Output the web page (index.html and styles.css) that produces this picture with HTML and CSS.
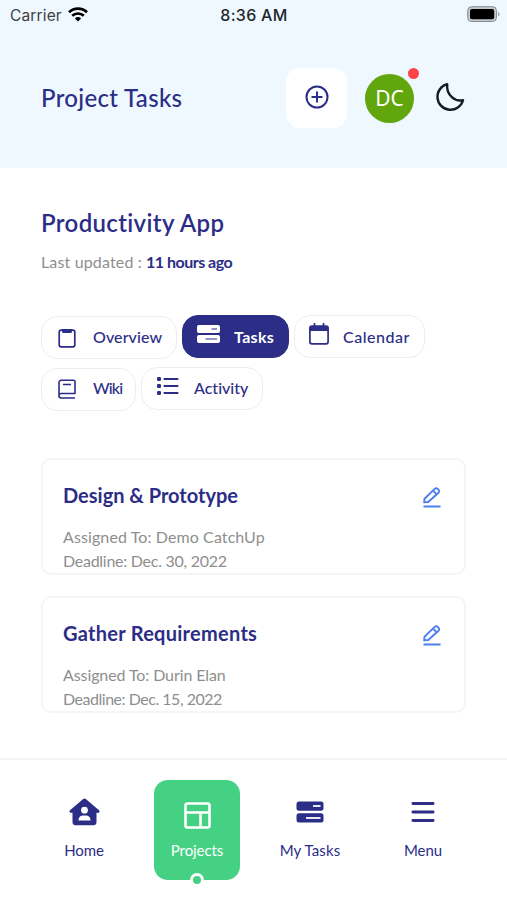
FILE: index.html
```html
<!DOCTYPE html>
<html lang="en">
<head>
    <meta charset="UTF-8">
    <meta name="viewport" content="width=device-width, initial-scale=1.0">
    <title>Project Tasks</title>
    <link rel="stylesheet" href="styles.css">
</head>
<body>
    <header>
        <div class="status-bar">
            <div class="carrier">
                <span>Carrier</span>
                <svg width="20" height="15" viewBox="0 0 20 15" fill="none" stroke="#000" stroke-width="2.7">
                    <path d="M1 5.3a13 13 0 0 1 18 0"/>
                    <path d="M4.2 8.8a8.4 8.4 0 0 1 11.6 0"/>
                    <path d="M10 14.6 6.9 11.5a4.5 4.5 0 0 1 6.2 0z" fill="#000" stroke="none"/>
                </svg>
            </div>
            <span class="time">8:36 AM</span>
            <svg class="battery" width="33" height="16" viewBox="0 0 33 16">
                <rect x=".7" y=".7" width="28.8" height="14.8" rx="4" fill="#c3c9cc" stroke="#858b8f"/>
                <rect x="3" y="3" width="24.2" height="10.2" rx="2" fill="#000"/>
                <path d="M31 5.8c2 .8 2 3.9 0 4.7z" fill="#9ba1a5"/>
            </svg>
        </div>
        <div class="header-row">
            <h1>Project Tasks</h1>
            <button class="add-btn">
                <svg width="24" height="24" viewBox="0 0 24 24" fill="none" stroke="#2b2d87" stroke-width="2">
                    <circle cx="12" cy="12" r="10.5"/>
                    <path d="M12 6.5v11M6.5 12h11"/>
                </svg>
            </button>
            <div class="avatar">DC<span class="dot"></span></div>
            <svg class="moon" width="30" height="30" viewBox="0 0 30 30" fill="none" stroke="#171b20" stroke-width="2.4" stroke-linejoin="round">
                <path d="M12.2 2.2A13 13 0 1 0 28 18.2C20.5 20 11 13.5 12.2 2.2z"/>
            </svg>
        </div>
    </header>

    <main>
        <h2>Productivity App</h2>
        <p class="updated"><span>Last updated :</span> <b>11 hours ago</b></p>

        <div class="tabs">
            <a class="tab overview">
                <svg width="24" height="24" viewBox="0 0 24 24" fill="none" stroke="#2b2d87" stroke-width="1.7">
                    <rect x="4.2" y="4.2" width="15.6" height="16.6" rx="2"/>
                    <path d="M7 3h10v2.5a1.5 1.5 0 0 1-1.5 1.5h-7A1.5 1.5 0 0 1 7 5.5z" fill="#2b2d87" stroke="none"/>
                </svg>
                <span>Overview</span>
            </a>
            <a class="tab tasks">
                <svg width="23" height="18" viewBox="0 0 23 18">
                    <rect width="23" height="8" rx="2" fill="#fff"/>
                    <rect y="10" width="23" height="8" rx="2" fill="#fff"/>
                    <path d="M14.5 4h5.5M8.5 14h11.5" stroke="#2b2d87" stroke-width="1.2"/>
                </svg>
                <span>Tasks</span>
            </a>
            <a class="tab calendar">
                <svg width="20" height="22" viewBox="0 0 20 22" fill="none" stroke="#2b2d87" stroke-width="1.7">
                    <rect x=".9" y="3" width="18.2" height="17.8" rx="2"/>
                    <path d="M1 3h18v5H1z" fill="#2b2d87" stroke="none"/>
                    <path d="M5.5 0v4M14.5 0v4"/>
                </svg>
                <span>Calendar</span>
            </a>
            <a class="tab wiki">
                <svg width="24" height="24" viewBox="0 0 24 24" fill="none" stroke="#2b2d87" stroke-width="1.6">
                    <path d="M20 16.5H6.2a2.2 2.2 0 0 0 0 4.5H20M4 18.5V5.500A2.200 2.200 0 0 1 6.200 3.300H18.500A1.500 1.500 0 0 1 20 4.800V17M8 7.500h8"/>
                </svg>
                <span>Wiki</span>
            </a>
            <a class="tab activity">
                <svg width="22" height="19" viewBox="0 0 22 19" fill="#2b2d87">
                    <rect width="4" height="4" rx="1.3"/>
                    <rect y="7" width="4" height="4" rx="1.3"/>
                    <rect y="14" width="4" height="4" rx="1.3"/>
                    <path d="M7.5 2h13M7.5 9h13M7.5 16h13" stroke="#2b2d87" stroke-width="2.2" stroke-linecap="round"/>
                </svg>
                <span>Activity</span>
            </a>
        </div>

        <div class="card">
            <div class="card-head">
                <h3>Design &amp; Prototype</h3>
                <svg width="18" height="21" viewBox="0 0 18 21" fill="none" stroke="#4c7ff0" stroke-width="1.9" stroke-linejoin="round">
                    <path d="M1.2 15.4 1.5 11.7 11.7 1.9a2.1 2.1 0 0 1 3 0l.8.8a2.1 2.1 0 0 1 0 3L5.2 15z"/>
                    <path d="M10 3.7 13.7 7.4M.5 19.5h17"/>
                </svg>
            </div>
            <p>Assigned To: Demo CatchUp</p>
            <p class="deadline">Deadline: Dec. 30, 2022</p>
        </div>
        <div class="card gather">
            <div class="card-head">
                <h3>Gather Requirements</h3>
                <svg width="18" height="21" viewBox="0 0 18 21" fill="none" stroke="#4c7ff0" stroke-width="1.9" stroke-linejoin="round">
                    <path d="M1.2 15.4 1.5 11.7 11.7 1.9a2.1 2.1 0 0 1 3 0l.8.8a2.1 2.1 0 0 1 0 3L5.2 15z"/>
                    <path d="M10 3.7 13.7 7.4M.5 19.5h17"/>
                </svg>
            </div>
            <p>Assigned To: Durin Elan</p>
            <p class="deadline">Deadline: Dec. 15, 2022</p>
        </div>
    </main>

    <nav>
        <a class="nav-item">
            <svg width="31" height="28" viewBox="0 0 31 28">
                <path d="M14.2 1a2 2 0 0 1 2.6 0L30 12.3c1 1 .4 2.4-.8 2.4H27.5v9.3a3.3 3.3 0 0 1-3.3 3.3H6.8A3.3 3.3 0 0 1 3.5 24V14.7H1.8C.6 14.7 0 13.3 1 12.3z" fill="#2b2d87"/>
                <circle cx="15.5" cy="12.2" r="3.4" fill="#fff"/>
                <path d="M9.5 22.5c0-3 1.9-4.9 4.5-4.9h3c2.6 0 4.5 1.9 4.5 4.9z" fill="#fff"/>
            </svg>
            <span>Home</span>
        </a>
        <a class="nav-item active">
            <svg width="27" height="27" viewBox="0 0 27 27" fill="none" stroke="#fff" stroke-width="2.6">
                <rect x="1.5" y="1.5" width="24" height="24" rx="2"/>
                <path d="M1.5 10.5h24M16.5 10.5v15"/>
            </svg>
            <span>Projects</span>
            <i class="knob"></i>
        </a>
        <a class="nav-item my-tasks">
            <svg width="28" height="22" viewBox="0 0 28 22">
                <rect x=".5" y=".5" width="27" height="9.3" rx="2.5" fill="#2b2d87"/>
                <rect x=".5" y="12.3" width="27" height="9.3" rx="2.5" fill="#2b2d87"/>
                <path d="M17 5h7.5M10 17h14.5" stroke="#e8e8f6" stroke-width="2"/>
            </svg>
            <span>My Tasks</span>
        </a>
        <a class="nav-item menu">
            <svg width="24" height="22" viewBox="0 0 24 22" stroke="#2b2d87" stroke-width="2.8" stroke-linecap="round">
                <path d="M1.9 2.5h20.2M1.9 11h20.2M1.9 19.5h20.2"/>
            </svg>
            <span>Menu</span>
        </a>
    </nav>
</body>
</html>
```
FILE: styles.css
```css
*{
    box-sizing: border-box;
    margin: 0;
    padding: 0;
}
body{
    width: 507px;
    height: 900px;
    display: flex;
    flex-direction: column;
    overflow: hidden;
    background-color: #fff;
    color: #2b2d87;
    font-family: Lato, "Liberation Sans", sans-serif;
    font-variant-ligatures: none;
    white-space: nowrap;
}
svg{
    display: block;
    flex: none;
}
header{
    height: 168px;
    background-color: #eff8ff;
}
.status-bar{
    height: 30px;
    padding: 0 8px 0 10px;
    display: grid;
    grid-template-columns: 1fr auto 1fr;
    align-items: center;
    font-family: Inter, sans-serif;
    font-size: 16px;
    color: #3c4145;
}
.carrier{
    display: flex;
    align-items: center;
    gap: 6px;
    font-size: 15.5px;
    letter-spacing: 0.15px;
}
.carrier svg{
    margin-top: -2px;
}
.time{
    margin-right: 1px;
    font-weight: 500;
    letter-spacing: 0.3px;
    color: #22272b;
}
.battery{
    justify-self: end;
    margin-top: -2px;
    margin-right: -1px;
}
.header-row{
    display: flex;
    align-items: center;
    height: 60px;
    margin-top: 38px;
    padding: 0 42px 0 41px;
}
h1{
    width: 245px;
    margin-top: -1px;
    font-size: 24px;
    font-weight: 500;
    letter-spacing: 0.33px;
}
.add-btn{
    width: 61px;
    height: 60px;
    padding-bottom: 2px;
    display: grid;
    place-items: center;
    border: 0;
    border-radius: 14px;
    background-color: #fff;
}
.avatar{
    position: relative;
    width: 49px;
    height: 49px;
    margin-left: 18px;
    border-radius: 50%;
    background-color: #60a60c;
    color: #fff;
    font: 21px/48px "Noto Sans", sans-serif;
    text-align: center;
}
.dot{
    position: absolute;
    top: -6px;
    right: -5px;
    width: 11px;
    height: 11px;
    border-radius: 50%;
    background-color: #fc4549;
}
.moon{
    margin-left: 21px;
    margin-top: -2px;
}

main{
    flex: 1;
    padding: 37px 41px 0;
}
h2{
    font-size: 24px;
    line-height: 36px;
    font-weight: 600;
    letter-spacing: 0.35px;
}
.updated{
    margin-top: 9px;
    font-size: 16px;
    line-height: 24px;
    color: #8e8e8e;
}
.updated span{
    letter-spacing: 0.15px;
}
.updated b{
    color: #2b2d87;
    letter-spacing: -0.5px;
}
.tabs{
    display: flex;
    flex-wrap: wrap;
    gap: 8px 5px;
    margin-top: 41px;
}
.tab{
    display: flex;
    align-items: center;
    height: 43px;
    padding-left: 14px;
    border: 1px solid #eeeef0;
    border-radius: 16px;
    font-size: 16px;
    font-weight: 500;
}
.tab svg{
    margin-right: 14px;
}
.tab span{
    margin-top: -1px;
}
.overview, .wiki{
    padding-left: 13px;
    margin-top: 1px;
}
.overview span{
    margin-top: -3px;
}
.overview{
    width: 136px;
    letter-spacing: 0.1px;
}
.tasks{
    width: 107px;
    background-color: #2b2d87;
    border-color: #2b2d87;
    color: #fff;
    font-weight: 700;
    letter-spacing: 0.3px;
}
.tasks svg, .calendar svg, .activity svg{
    margin-top: -5px;
}
.calendar{
    width: 131px;
    letter-spacing: 0.5px;
}
.wiki{
    width: 95px;
    letter-spacing: -0.8px;
}
.wiki svg{
    margin-top: -2px;
}
.wiki span{
    margin-top: -5px;
}
.activity{
    width: 122px;
    padding-left: 15px;
}
.activity svg{
    margin-right: 15px;
}
.activity span{
    margin-top: -3px;
}

.card{
    height: 117px;
    padding: 21px 23px 0 20px;
    border: 2px solid #f5f5f6;
    border-radius: 10px;
    font-size: 16px;
    line-height: 24px;
    color: #8e8e8e;
}
.card p{
    letter-spacing: 0.1px;
}
.card .deadline{
    letter-spacing: -0.27px;
}
.tabs + .card{
    margin-top: 47px;
}
.card + .card{
    margin-top: 21px;
}
.card-head{
    display: flex;
    justify-content: space-between;
    align-items: center;
    height: 28px;
    margin-bottom: 16px;
    color: #2b2d87;
}
.card-head svg{
    margin-top: 4px;
}
h3{
    font-size: 20px;
    font-weight: 700;
}
.gather h3{
    letter-spacing: 0.27px;
}
.gather p{
    letter-spacing: -0.1px;
}
.gather .deadline{
    letter-spacing: -0.48px;
}

nav{
    display: flex;
    gap: 27px;
    height: 142px;
    padding: 20px 41px 0;
    border-top: 2px solid #f5f5f6;
}
.nav-item{
    position: relative;
    display: flex;
    flex-direction: column;
    align-items: center;
    justify-content: space-between;
    width: 86px;
    height: 100px;
    padding: 18px 0 19px;
    font-size: 15px;
    line-height: 22px;
    letter-spacing: -0.1px;
}
.active{
    padding-top: 22px;
    border-radius: 14px;
    background-color: #45d183;
    color: #fff;
}
.my-tasks, .menu{
    padding-top: 21px;
}
.my-tasks{
    letter-spacing: 0.1px;
}
.knob{
    position: absolute;
    left: 36px;
    bottom: -7px;
    width: 14px;
    height: 14px;
    border: 3px solid #fff;
    border-radius: 50%;
    background-color: #45d183;
}
```
